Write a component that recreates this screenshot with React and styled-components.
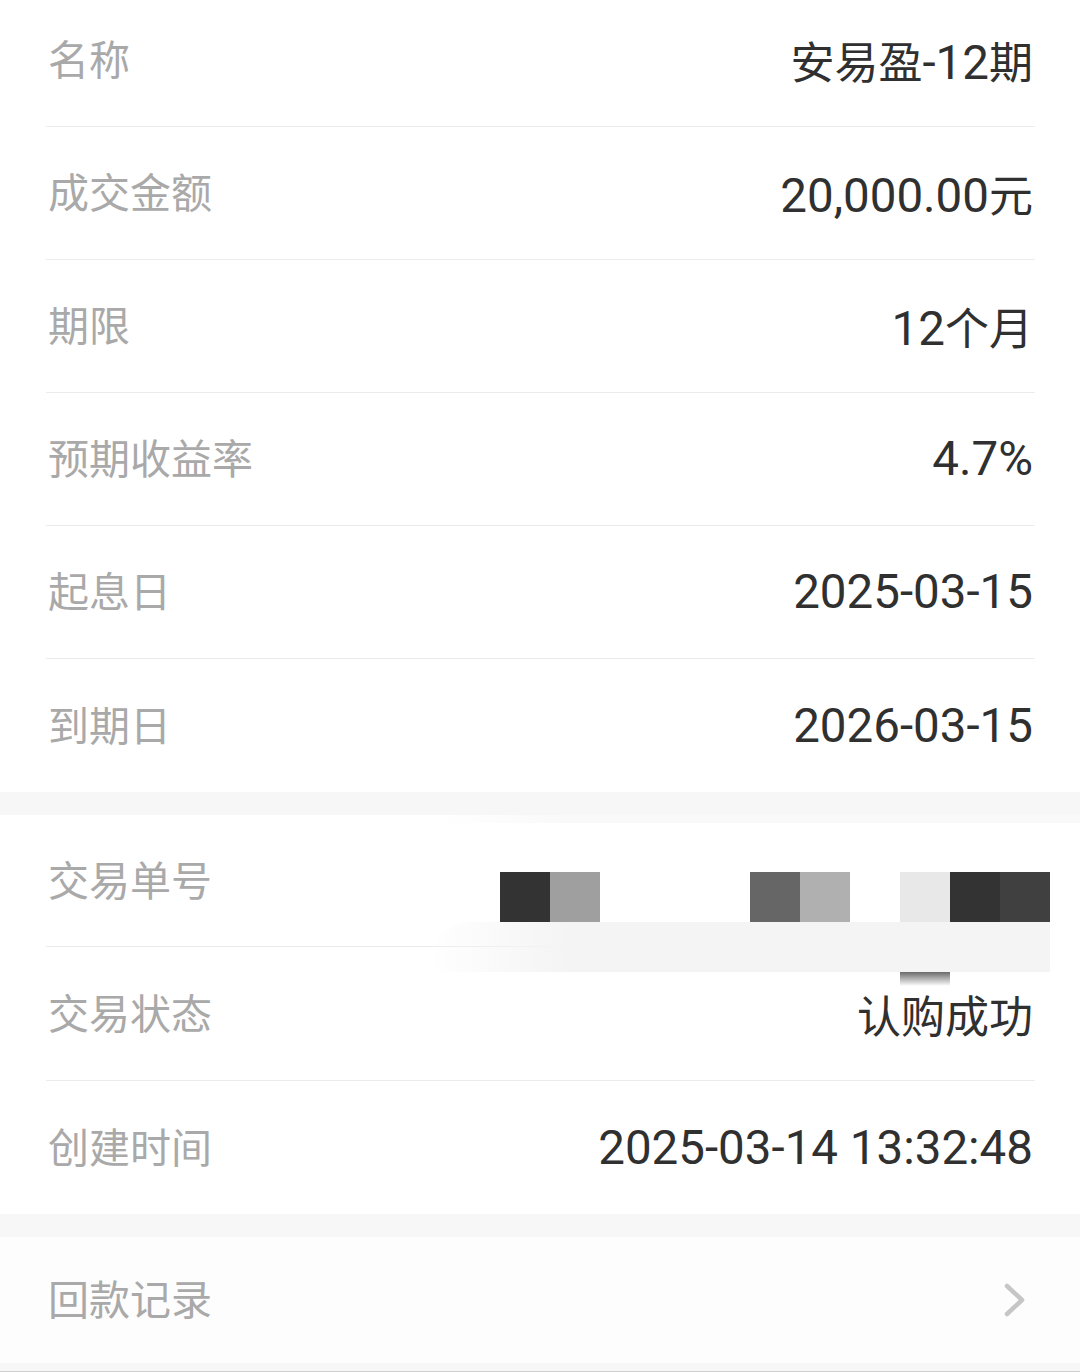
import styled, { createGlobalStyle } from "styled-components";

const GlobalStyle = createGlobalStyle`
  html, body {
    margin: 0;
    padding: 0;
    background: #f7f7f7;
  }
  body {
    font-family: Roboto, "Noto Sans CJK SC", sans-serif;
  }
`;

const Page = styled.div`
  width: 1080px;
  height: 1372px;
  overflow: hidden;
  position: relative;
  display: flex;
  flex-direction: column;
  gap: 23px;
  background: #f7f7f7;
  border-bottom: 1px solid #cfcfcf;
  box-sizing: border-box;
`;

const Card = styled.div`
  background: ${(p) => p.$bg || "#ffffff"};
  padding: 0 45px 0 46px;
  margin-top: ${(p) => p.$offset || 0}px;
  position: relative;
  flex-shrink: 0;
`;

const Row = styled.div`
  height: ${(p) => p.$h || 133}px;
  display: flex;
  align-items: center;
  justify-content: space-between;
  padding-bottom: 6px;
  border-bottom: ${(p) => (p.$last ? "none" : "1px solid #ececec")};
  box-sizing: border-box;
`;

const Label = styled.span`
  font-family: "Noto Sans CJK SC", sans-serif;
  font-size: 41px;
  color: #a9a9a9;
  padding-left: 2px;
`;

const Value = styled.span`
  font-family: Roboto, "Noto Sans CJK SC", sans-serif;
  color: #303030;
  padding-right: 2px;
  padding-top: 6px;
  display: flex;
  align-items: baseline;
  white-space: pre;
`;

const Num = styled.span`
  font-family: Roboto, sans-serif;
  font-size: 47.5px;
`;

const Han = styled.span`
  font-family: "Noto Sans CJK SC", sans-serif;
  font-size: 44px;
`;

const Chevron = styled.svg`
  width: 30px;
  height: 40px;
  margin-right: 6px;
  margin-top: 6px;
`;

const Mosaic = styled.div`
  position: absolute;
  left: 500px;
  top: 57px;
  display: grid;
  grid-template-columns: repeat(11, 50px);
  grid-template-rows: 50px;
`;

const Tile = styled.div`
  background: ${(p) => p.$c};
`;

const Smear = styled.div`
  position: absolute;
  left: 430px;
  top: 107px;
  width: 620px;
  height: 50px;
  background: linear-gradient(90deg, rgba(244, 244, 244, 0) 0%, #f4f4f4 22%, #f4f4f4 100%);
  border-radius: 40px 0 0 0;
`;

const Drip = styled.div`
  position: absolute;
  left: 900px;
  top: 157px;
  width: 50px;
  height: 14px;
  background: linear-gradient(180deg, #6a6a6a 0%, rgba(255, 255, 255, 0) 100%);
`;

const TopGlow = styled.div`
  position: absolute;
  left: 440px;
  top: 0;
  right: 0;
  height: 8px;
  background: linear-gradient(90deg, rgba(247, 247, 247, 0) 0%, #f9f9f9 20%, #f9f9f9 100%);
`;

const details = [
  ["名称", "安易盈-12期"],
  ["成交金额", "20,000.00元"],
  ["期限", "12个月"],
  ["预期收益率", "4.7%"],
  ["起息日", "2025-03-15"],
  ["到期日", "2026-03-15"],
];

const tiles = [
  "#333333", "#9f9f9f", "transparent", "transparent", "transparent",
  "#666666", "#b0b0b0", "transparent", "#e8e8e8", "#333333", "#404040",
];

// split a value into runs of CJK and latin so each gets its own size
const Text = ({ children }) => {
  const parts = (children || "").split(/([\u4e00-\u9fff]+)/).filter(Boolean);
  return (
    <Value>
      {parts.map((p, i) =>
        /[\u4e00-\u9fff]/.test(p) ? <Han key={i}>{p}</Han> : <Num key={i}>{p}</Num>
      )}
    </Value>
  );
};

const App = () => {
  return (
    <>
      <GlobalStyle />
      <Page>
        <Card $offset={-6}>
          {details.map(([k, v], i) => (
            <Row key={k} $last={i === details.length - 1}>
              <Label>{k}</Label>
              <Text>{v}</Text>
            </Row>
          ))}
        </Card>
        <Card>
          <TopGlow />
          <Row $h={132}>
            <Label>交易单号</Label>
            <Text />
          </Row>
          <Row $h={134}>
            <Label>交易状态</Label>
            <Text>认购成功</Text>
          </Row>
          <Row $last>
            <Label>创建时间</Label>
            <Text>2025-03-14 13:32:48</Text>
          </Row>
          <Smear />
          <Drip />
          <Mosaic>
            {tiles.map((c, i) => (
              <Tile key={i} $c={c} />
            ))}
          </Mosaic>
        </Card>
        <Card $bg="#fdfdfd">
          <Row $h={126} $last>
            <Label>回款记录</Label>
            <Chevron viewBox="0 0 30 40">
              <path d="M8 6 L23 20 L8 34" fill="none" stroke="#c6c6c6" strokeWidth="4.5" strokeLinecap="round" strokeLinejoin="round" />
            </Chevron>
          </Row>
        </Card>
      </Page>
    </>
  );
};

export default App;
